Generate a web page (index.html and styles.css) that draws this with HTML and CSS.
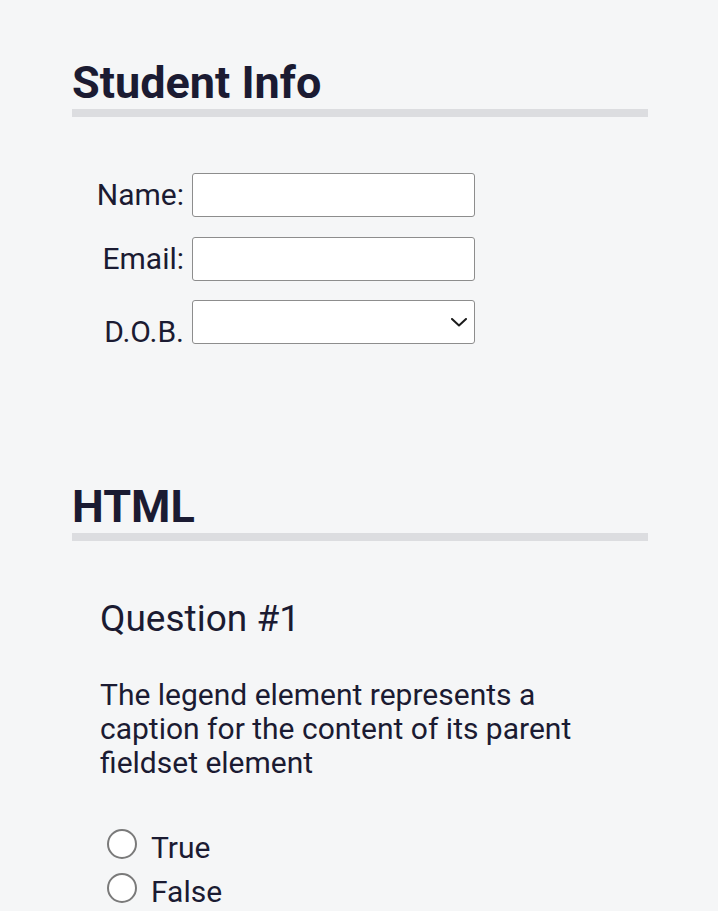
FILE: index.html
```html
<!DOCTYPE html>
<html lang="en">
<head>
<meta charset="utf-8">
<title>Survey</title>
<link rel="stylesheet" href="styles.css">
</head>
<body>
<main class="page">
  <section class="section">
    <h2 class="section-title">Student Info</h2>
    <div class="fields">
      <div class="field">
        <label class="field-label" for="name">Name:</label>
        <input class="field-input" id="name" type="text">
      </div>
      <div class="field">
        <label class="field-label" for="email">Email:</label>
        <input class="field-input" id="email" type="email">
      </div>
      <div class="field">
        <label class="field-label field-label--low" for="dob">D.O.B.</label>
        <div class="select-wrap">
          <select class="field-input field-select" id="dob"><option></option></select>
          <svg class="chevron" width="16" height="9" viewBox="0 0 16 9" aria-hidden="true"><path d="M1 1 L8 7.5 L15 1" fill="none" stroke="#1b1b1b" stroke-width="2" stroke-linecap="round" stroke-linejoin="round"/></svg>
        </div>
      </div>
    </div>
  </section>
  <section class="section section--html">
    <h2 class="section-title">HTML</h2>
    <div class="question">
      <h3 class="question-title">Question #1</h3>
      <p class="question-text">The legend element represents a caption for the content of its parent fieldset element</p>
      <div class="options">
        <label class="option"><input class="radio" type="radio" name="q1"><span class="option-text">True</span></label>
        <label class="option"><input class="radio" type="radio" name="q1"><span class="option-text">False</span></label>
      </div>
    </div>
  </section>
</main>
</body>
</html>
```
FILE: styles.css
```css
html, body {
  margin: 0;
  padding: 0;
}
body {
  background: #f5f6f7;
  color: #1b1b32;
  font-family: Roboto, "Liberation Sans", Arial, sans-serif;
  font-size: 30px;
}
.page {
  width: 576px;
  padding: 0 0 0 72px;
}
.section {
  padding-top: 56px;
}
.section--html {
  padding-top: 136px;
}
.section-title {
  margin: 0;
  font-size: 45px;
  font-weight: 700;
  line-height: normal;
  border-bottom: 8px solid #dcdde0;
}
.fields {
  display: flex;
  flex-direction: column;
  gap: 19.5px;
  margin-top: 56px;
}
.field {
  display: flex;
  align-items: center;
  gap: 8px;
}
.field-label {
  width: 112px;
  text-align: right;
  line-height: 34px;
}
.field-label--low {
  align-self: flex-end;
  line-height: 24px;
}
.field-input {
  box-sizing: border-box;
  width: 283px;
  height: 44px;
  margin: 0;
  background: #fff;
  border: 1px solid #8d8d8d;
  border-radius: 3px;
  font: inherit;
}
.select-wrap {
  position: relative;
  width: 283px;
  height: 44px;
}
.field-select {
  appearance: none;
  -webkit-appearance: none;
  display: block;
}
.chevron {
  position: absolute;
  right: 8px;
  top: 18px;
  pointer-events: none;
}
.question {
  width: 480px;
  padding-left: 28px;
  margin-top: 57px;
}
.question-title {
  margin: 0;
  font-size: 37px;
  font-weight: 400;
  line-height: 42px;
}
.question-text {
  margin: 38px 0 0;
  line-height: 34px;
}
.options {
  display: flex;
  flex-direction: column;
  gap: 10px;
  margin-top: 51px;
}
.option {
  display: flex;
  align-items: flex-start;
  line-height: 34px;
}
.radio {
  appearance: none;
  -webkit-appearance: none;
  box-sizing: border-box;
  width: 30px;
  height: 30px;
  margin: -2px 0 0 7px;
  border: 2px solid #7a7a7a;
  border-radius: 50%;
  background: #fff;
}
.option-text {
  margin-left: 14px;
}
```
